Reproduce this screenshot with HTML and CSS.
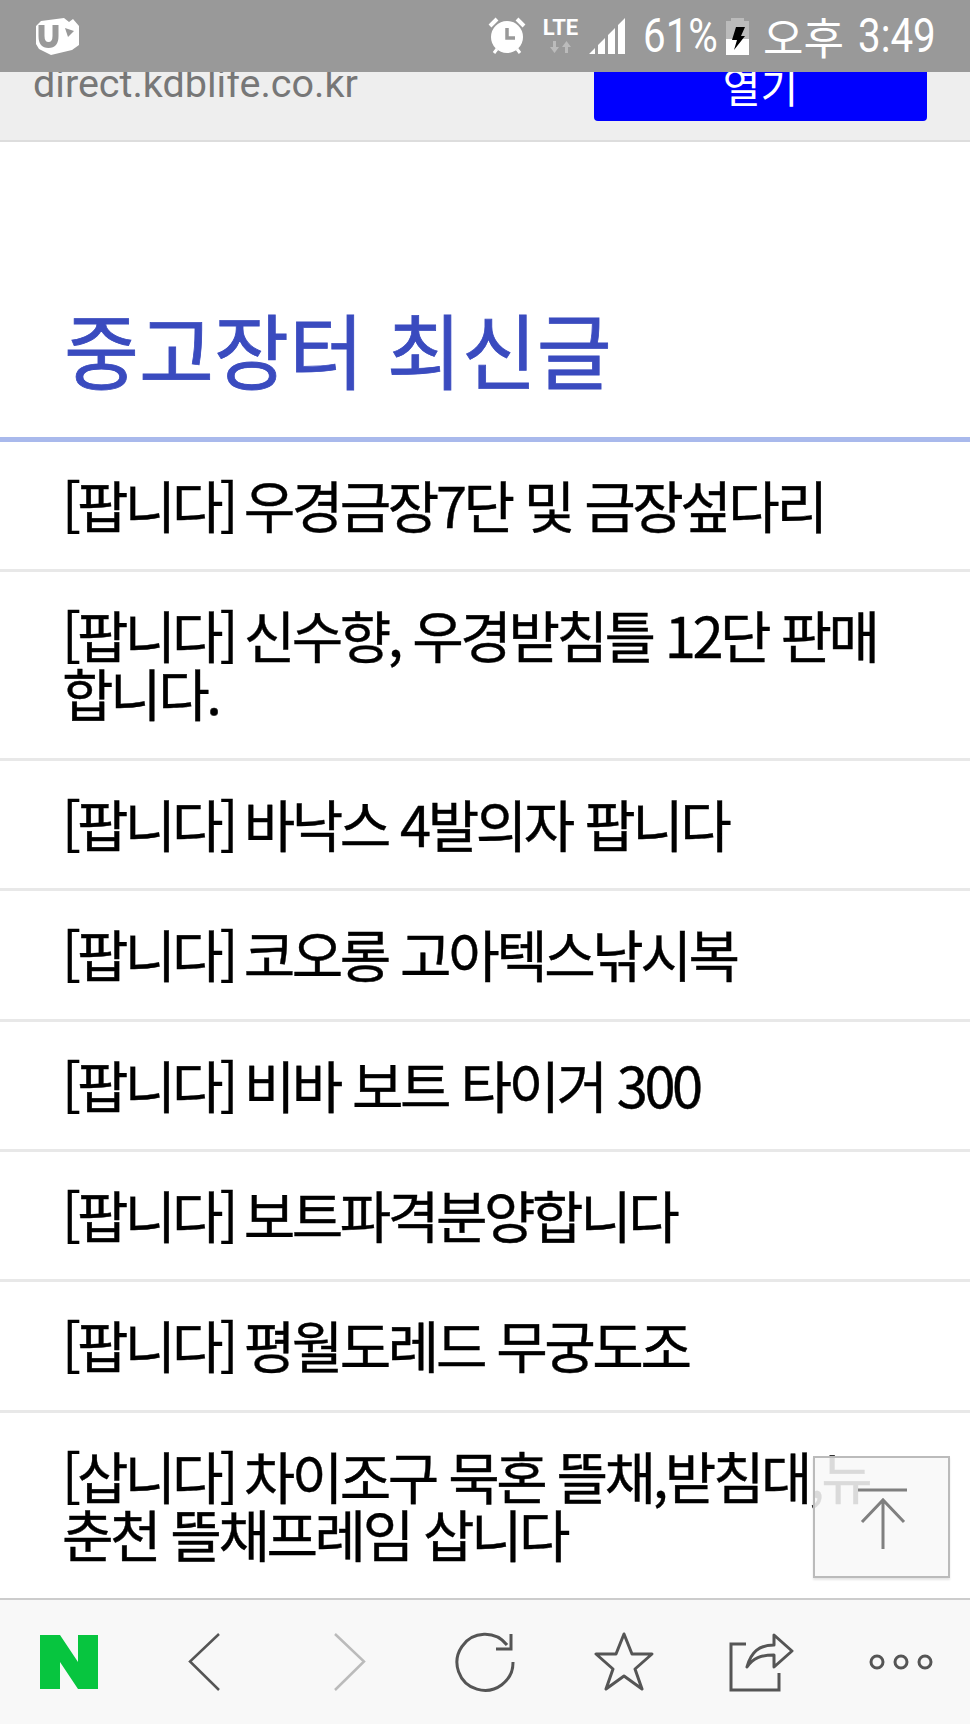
FILE: index.html

```html
<!DOCTYPE html>
<html lang="ko">
<head>
    <meta charset="UTF-8">
    <meta name="viewport" content="width=device-width, initial-scale=1.0">
    <title>중고장터 최신글</title>
    <link rel="stylesheet" href="styles.css">
</head>
<body>
    <!-- status bar sits on top of the page -->
    <div class="status-bar">
        <svg class="logo-u" width="44" height="38" viewBox="0 0 44 38">
            <path d="M5 4 L28 1 L33 5 L37 2 L43 9 L43 28 L36 33 L15 38 L3 32 L0 27 L0 9 Z" fill="#fff"/>
            <path d="M5.500 8 V19 Q5.500 28 12.500 28 Q19.500 28 19.500 19 V8" fill="none" stroke="#999" stroke-width="6"/>
            <path d="M29 11 L38 14 L32 20 Z" fill="#999"/>
        </svg>
        <div class="status-right">
            <svg class="icon-alarm" width="38" height="38" viewBox="0 0 38 38">
                <circle cx="19" cy="20" r="16" fill="#fff"/>
                <path d="M2 9 L9 2 M36 9 L29 2" stroke="#fff" stroke-width="4"/>
                <path d="M6 36 L9 32 M32 36 L29 32" stroke="#fff" stroke-width="3"/>
                <path d="M19 11 V21 H27" fill="none" stroke="#999" stroke-width="3.5"/>
            </svg>
            <div class="net">
                <span class="lte">LTE</span>
                <svg width="21" height="12" viewBox="0 0 21 12">
                    <path d="M3 0 H6 V6 H9 L4.500 12 L0 6 H3 Z" fill="#bbb"/>
                    <path d="M15 12 H18 V6 H21 L16.500 0 L12 6 H15 Z" fill="#bbb"/>
                </svg>
            </div>
            <svg class="icon-signal" width="36" height="36" viewBox="0 0 36 36">
                <path d="M0 36 L6 30 V36 Z M9 27 L16 20 V36 H9 Z M19 17 L26 10 V36 H19 Z M29 7 L36 0 V36 H29 Z" fill="#fff"/>
            </svg>
            <span class="status-text pct">61%</span>
            <svg class="icon-battery" width="23" height="37" viewBox="0 0 23 37">
                <path d="M5 0 H18 V3 H23 V21 H0 V3 H5 Z" fill="#bbb"/>
                <rect y="21" width="23" height="16" fill="#fff"/>
                <path d="M10 9 H19 L15 18 H19 L8 32 L11 22 H6 Z" fill="#000"/>
            </svg>
            <span class="ampm">오후</span>
            <span class="status-text clock">3:49</span>
        </div>
    </div>

    <div class="ad">
        <span class="ad-url">direct.kdblife.co.kr</span>
        <a class="ad-btn">열기</a>
    </div>

    <h2 class="board-title">중고장터 최신글</h2>

    <ul class="post-list">
        <li><span class="tag">[팝니다]</span> 우경금장7단 및 금장섶다리</li>
        <li><span class="tag">[팝니다]</span> 신수향, 우경받침틀 12단 판매합니다.</li>
        <li><span class="tag">[팝니다]</span> 바낙스 4발의자 팝니다</li>
        <li><span class="tag">[팝니다]</span> 코오롱 고아텍스낚시복</li>
        <li><span class="tag">[팝니다]</span> 비바 보트 타이거 300</li>
        <li><span class="tag">[팝니다]</span> 보트파격분양합니다</li>
        <li><span class="tag">[팝니다]</span> 평월도레드 무궁도조</li>
        <li><span class="tag">[삽니다]</span> 차이조구 묵혼 뜰채,받침대,뉴 춘천 뜰채프레임 삽니다</li>
    </ul>

    <a class="to-top">
        <svg width="50" height="62" viewBox="0 0 50 62">
            <path d="M0 2 H49 M25 12 V61 M4 34 L25 12 L46 34" fill="none" stroke="#808080" stroke-width="3"/>
        </svg>
    </a>

    <nav class="toolbar">
        <a>
            <svg width="58" height="54" viewBox="0 0 58 54">
                <path d="M0 0 H20 L38 27 V0 H58 V54 H38 L20 27 V54 H0 Z" fill="#07c53f"/>
            </svg>
        </a>
        <a class="nudge-left">
            <svg width="32" height="58" viewBox="0 0 32 58">
                <path d="M31 1 L2 28.500 L31 57" fill="none" stroke="#555" stroke-width="2.500"/>
            </svg>
        </a>
        <a class="nudge-right">
            <svg width="32" height="58" viewBox="0 0 32 58">
                <path d="M1 1 L30 28.500 L1 57" fill="none" stroke="#bbb" stroke-width="2.500"/>
            </svg>
        </a>
        <a>
            <svg width="60" height="60" viewBox="0 0 60 60">
                <path d="M58 30 A28 28 0 1 1 52 13 M56 2 V17 H41" fill="none" stroke="#555" stroke-width="3"/>
            </svg>
        </a>
        <a>
            <svg width="60" height="60" viewBox="0 0 60 60">
                <path d="M30 2 L38 22 H58 L41 37 L48 57 L30 44 L12 57 L19 37 L2 22 H22 Z" fill="none" stroke="#555" stroke-width="3" stroke-linejoin="round"/>
            </svg>
        </a>
        <a>
            <svg width="66" height="60" viewBox="0 0 66 60">
                <path d="M17 12 H2 V58 H50 V41" fill="none" stroke="#555" stroke-width="3"/>
                <path d="M63 19 L45 3 V13 C30 13 22 20 18 35 C24 26 32 23 45 23 V35 Z" fill="none" stroke="#555" stroke-width="3" stroke-linejoin="round"/>
            </svg>
        </a>
        <a>
            <svg width="64" height="16" viewBox="0 0 64 16">
                <circle cx="8" cy="8" r="6" fill="none" stroke="#555" stroke-width="3"/>
                <circle cx="32" cy="8" r="6" fill="none" stroke="#555" stroke-width="3"/>
                <circle cx="56" cy="8" r="6" fill="none" stroke="#555" stroke-width="3"/>
            </svg>
        </a>
    </nav>
</body>
</html>
```

FILE: styles.css

```css
html, body {
    margin: 0;
    padding: 0;
}
body {
    position: relative;
    width: 970px;
    height: 1724px;
    overflow: hidden;
    display: flex;
    flex-direction: column;
    background-color: #fff;
    font-family: "Noto Sans CJK KR", Roboto, sans-serif;
}

/* status bar */
.status-bar {
    position: absolute;
    top: 0;
    left: 0;
    right: 0;
    z-index: 5;
    height: 72px;
    padding: 0 34px 0 36px;
    display: flex;
    align-items: center;
    justify-content: space-between;
    background-color: #999;
    color: #fff;
}
.logo-u {
    display: block;
}
.status-right {
    display: flex;
    align-items: center;
}
.icon-alarm {
    margin-right: 15px;
}
.net {
    width: 39px;
    margin-right: 9px;
    display: flex;
    flex-direction: column;
    align-items: center;
    gap: 4px;
}
.lte {
    font-family: Roboto, sans-serif;
    font-weight: 700;
    font-size: 22px;
    line-height: 18px;
}
.icon-signal {
    margin-right: 18px;
}
/* digits are narrower on the phone, so squeeze Roboto */
.status-text {
    font-family: Roboto, sans-serif;
    font-size: 48px;
    line-height: 50px;
    white-space: nowrap;
    transform: scaleX(0.84);
    transform-origin: left center;
}
.pct {
    width: 74px;
    margin-right: 9px;
}
.clock {
    width: 78px;
}
.ampm {
    width: 82px;
    margin: 0 13px 0 14px;
    font-size: 44px;
    line-height: 50px;
    white-space: nowrap;
}

/* ad strip */
.ad {
    box-sizing: border-box;
    flex: none;
    height: 142px;
    padding: 0 43px 19px 33px;
    display: flex;
    align-items: flex-end;
    justify-content: space-between;
    background-color: #eee;
    border-bottom: 2px solid #ddd;
}
.ad-url {
    margin-bottom: 15px;
    font-family: Roboto, sans-serif;
    font-size: 39.500px;
    line-height: 44px;
    color: #777;
}
.ad-btn {
    width: 333px;
    height: 71px;
    line-height: 71px;
    text-align: center;
    font-size: 41px;
    color: #fff;
    background-color: #00f;
    border-radius: 0 0 4px 4px;
}

/* board */
.board-title {
    flex: none;
    margin: 0;
    padding: 160px 64px 45px;
    font-size: 81.500px;
    line-height: 90px;
    font-weight: 400;
    -webkit-text-stroke: 0.8px #3a4bbf;
    color: #3a4bbf;
    border-bottom: 5px solid #a9b9ec;
}
.post-list {
    flex: 1;
    min-height: 0;
    margin: 0;
    padding: 0;
    list-style: none;
}
.post-list li {
    padding: 33px 68px 36.400px 62px;
    font-size: 56px;
    line-height: 58px;
    letter-spacing: -3.450px;
    -webkit-text-stroke: 0.4px #000;
    color: #000;
    border-bottom: 3px solid #e8e8e8;
}
.post-list li:last-child {
    border-bottom: none;
}
.tag {
    margin-right: -3px;
    letter-spacing: -4px;
}

/* back to top */
.to-top {
    box-sizing: border-box;
    position: absolute;
    left: 813px;
    top: 1456px;
    width: 137px;
    height: 122px;
    padding: 30px 0 0 43px;
    background-color: rgba(248, 248, 248, 0.88);
    border: 2px solid #bbb;
    box-shadow: 0 2px 2px rgba(0, 0, 0, 0.1);
}
.to-top svg {
    display: block;
}

/* bottom toolbar */
.toolbar {
    box-sizing: border-box;
    flex: none;
    height: 126px;
    display: grid;
    grid-template-columns: repeat(7, 1fr);
    align-items: center;
    justify-items: center;
    background-color: #f8f8f8;
    border-top: 2px solid #ccc;
}
.toolbar a {
    display: flex;
}
.nudge-left {
    margin-right: 8px;
}
.nudge-right {
    margin-left: 8px;
}
```
